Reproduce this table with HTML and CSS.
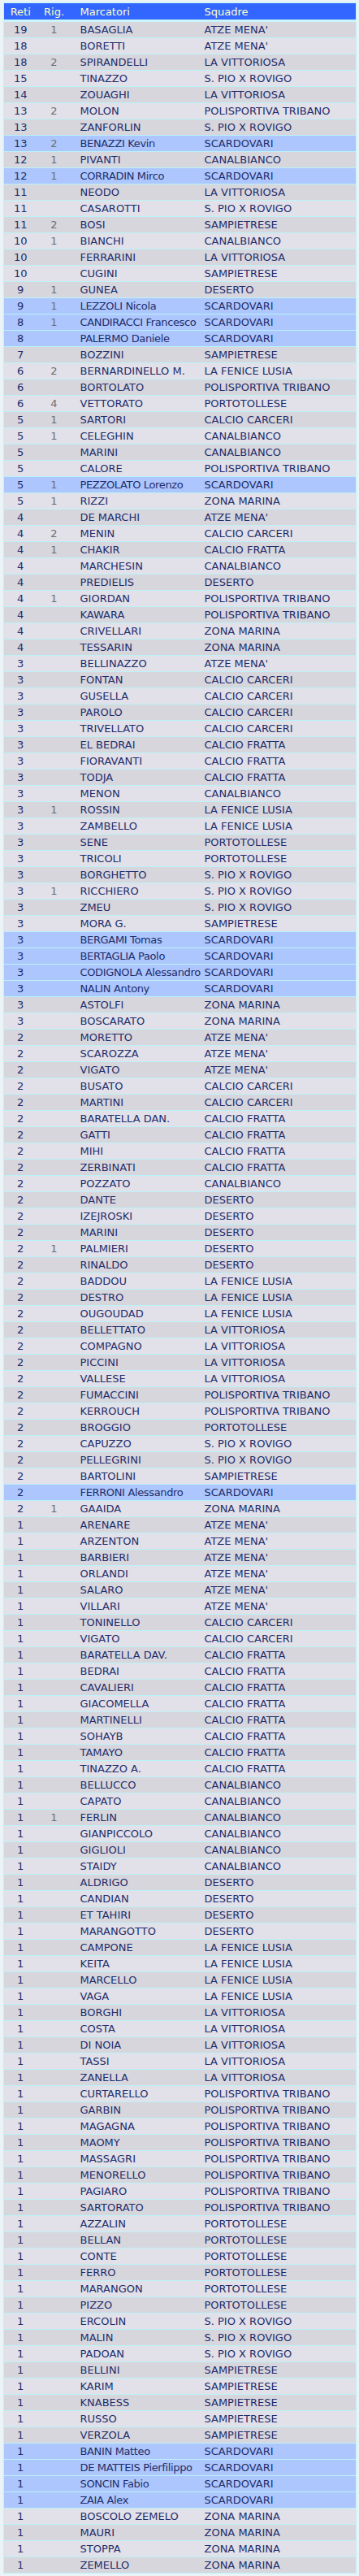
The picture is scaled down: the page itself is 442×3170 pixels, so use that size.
FILE: index.html
```html
<!DOCTYPE html>
<html lang="it">
<head>
<meta charset="utf-8">
<title>Marcatori</title>
<link rel="stylesheet" href="styles.css">
</head>
<body>
<div class="wrap">
<table class="scorers">
<colgroup><col class="c-reti"><col class="c-rig"><col class="c-name"><col class="c-team"></colgroup>
<thead>
<tr><th class="num">Reti</th><th class="num">Rig.</th><th class="txt">Marcatori</th><th class="txt team">Squadre</th></tr>
</thead>
<tbody>
<tr><td class="num">19</td><td class="rig">1</td><td class="txt">BASAGLIA</td><td class="txt team">ATZE MENA'</td></tr>
<tr><td class="num">18</td><td class="rig"></td><td class="txt">BORETTI</td><td class="txt team">ATZE MENA'</td></tr>
<tr><td class="num">18</td><td class="rig">2</td><td class="txt">SPIRANDELLI</td><td class="txt team">LA VITTORIOSA</td></tr>
<tr><td class="num">15</td><td class="rig"></td><td class="txt">TINAZZO</td><td class="txt team">S. PIO X ROVIGO</td></tr>
<tr><td class="num">14</td><td class="rig"></td><td class="txt">ZOUAGHI</td><td class="txt team">LA VITTORIOSA</td></tr>
<tr><td class="num">13</td><td class="rig">2</td><td class="txt">MOLON</td><td class="txt team">POLISPORTIVA TRIBANO</td></tr>
<tr><td class="num">13</td><td class="rig"></td><td class="txt">ZANFORLIN</td><td class="txt team">S. PIO X ROVIGO</td></tr>
<tr class="own"><td class="num">13</td><td class="rig">2</td><td class="txt">BENAZZI Kevin</td><td class="txt team">SCARDOVARI</td></tr>
<tr><td class="num">12</td><td class="rig">1</td><td class="txt">PIVANTI</td><td class="txt team">CANALBIANCO</td></tr>
<tr class="own"><td class="num">12</td><td class="rig">1</td><td class="txt">CORRADIN Mirco</td><td class="txt team">SCARDOVARI</td></tr>
<tr><td class="num">11</td><td class="rig"></td><td class="txt">NEODO</td><td class="txt team">LA VITTORIOSA</td></tr>
<tr><td class="num">11</td><td class="rig"></td><td class="txt">CASAROTTI</td><td class="txt team">S. PIO X ROVIGO</td></tr>
<tr><td class="num">11</td><td class="rig">2</td><td class="txt">BOSI</td><td class="txt team">SAMPIETRESE</td></tr>
<tr><td class="num">10</td><td class="rig">1</td><td class="txt">BIANCHI</td><td class="txt team">CANALBIANCO</td></tr>
<tr><td class="num">10</td><td class="rig"></td><td class="txt">FERRARINI</td><td class="txt team">LA VITTORIOSA</td></tr>
<tr><td class="num">10</td><td class="rig"></td><td class="txt">CUGINI</td><td class="txt team">SAMPIETRESE</td></tr>
<tr><td class="num">9</td><td class="rig">1</td><td class="txt">GUNEA</td><td class="txt team">DESERTO</td></tr>
<tr class="own"><td class="num">9</td><td class="rig">1</td><td class="txt">LEZZOLI Nicola</td><td class="txt team">SCARDOVARI</td></tr>
<tr class="own"><td class="num">8</td><td class="rig">1</td><td class="txt">CANDIRACCI Francesco</td><td class="txt team">SCARDOVARI</td></tr>
<tr class="own"><td class="num">8</td><td class="rig"></td><td class="txt">PALERMO Daniele</td><td class="txt team">SCARDOVARI</td></tr>
<tr><td class="num">7</td><td class="rig"></td><td class="txt">BOZZINI</td><td class="txt team">SAMPIETRESE</td></tr>
<tr><td class="num">6</td><td class="rig">2</td><td class="txt">BERNARDINELLO M.</td><td class="txt team">LA FENICE LUSIA</td></tr>
<tr><td class="num">6</td><td class="rig"></td><td class="txt">BORTOLATO</td><td class="txt team">POLISPORTIVA TRIBANO</td></tr>
<tr><td class="num">6</td><td class="rig">4</td><td class="txt">VETTORATO</td><td class="txt team">PORTOTOLLESE</td></tr>
<tr><td class="num">5</td><td class="rig">1</td><td class="txt">SARTORI</td><td class="txt team">CALCIO CARCERI</td></tr>
<tr><td class="num">5</td><td class="rig">1</td><td class="txt">CELEGHIN</td><td class="txt team">CANALBIANCO</td></tr>
<tr><td class="num">5</td><td class="rig"></td><td class="txt">MARINI</td><td class="txt team">CANALBIANCO</td></tr>
<tr><td class="num">5</td><td class="rig"></td><td class="txt">CALORE</td><td class="txt team">POLISPORTIVA TRIBANO</td></tr>
<tr class="own"><td class="num">5</td><td class="rig">1</td><td class="txt">PEZZOLATO Lorenzo</td><td class="txt team">SCARDOVARI</td></tr>
<tr><td class="num">5</td><td class="rig">1</td><td class="txt">RIZZI</td><td class="txt team">ZONA MARINA</td></tr>
<tr><td class="num">4</td><td class="rig"></td><td class="txt">DE MARCHI</td><td class="txt team">ATZE MENA'</td></tr>
<tr><td class="num">4</td><td class="rig">2</td><td class="txt">MENIN</td><td class="txt team">CALCIO CARCERI</td></tr>
<tr><td class="num">4</td><td class="rig">1</td><td class="txt">CHAKIR</td><td class="txt team">CALCIO FRATTA</td></tr>
<tr><td class="num">4</td><td class="rig"></td><td class="txt">MARCHESIN</td><td class="txt team">CANALBIANCO</td></tr>
<tr><td class="num">4</td><td class="rig"></td><td class="txt">PREDIELIS</td><td class="txt team">DESERTO</td></tr>
<tr><td class="num">4</td><td class="rig">1</td><td class="txt">GIORDAN</td><td class="txt team">POLISPORTIVA TRIBANO</td></tr>
<tr><td class="num">4</td><td class="rig"></td><td class="txt">KAWARA</td><td class="txt team">POLISPORTIVA TRIBANO</td></tr>
<tr><td class="num">4</td><td class="rig"></td><td class="txt">CRIVELLARI</td><td class="txt team">ZONA MARINA</td></tr>
<tr><td class="num">4</td><td class="rig"></td><td class="txt">TESSARIN</td><td class="txt team">ZONA MARINA</td></tr>
<tr><td class="num">3</td><td class="rig"></td><td class="txt">BELLINAZZO</td><td class="txt team">ATZE MENA'</td></tr>
<tr><td class="num">3</td><td class="rig"></td><td class="txt">FONTAN</td><td class="txt team">CALCIO CARCERI</td></tr>
<tr><td class="num">3</td><td class="rig"></td><td class="txt">GUSELLA</td><td class="txt team">CALCIO CARCERI</td></tr>
<tr><td class="num">3</td><td class="rig"></td><td class="txt">PAROLO</td><td class="txt team">CALCIO CARCERI</td></tr>
<tr><td class="num">3</td><td class="rig"></td><td class="txt">TRIVELLATO</td><td class="txt team">CALCIO CARCERI</td></tr>
<tr><td class="num">3</td><td class="rig"></td><td class="txt">EL BEDRAI</td><td class="txt team">CALCIO FRATTA</td></tr>
<tr><td class="num">3</td><td class="rig"></td><td class="txt">FIORAVANTI</td><td class="txt team">CALCIO FRATTA</td></tr>
<tr><td class="num">3</td><td class="rig"></td><td class="txt">TODJA</td><td class="txt team">CALCIO FRATTA</td></tr>
<tr><td class="num">3</td><td class="rig"></td><td class="txt">MENON</td><td class="txt team">CANALBIANCO</td></tr>
<tr><td class="num">3</td><td class="rig">1</td><td class="txt">ROSSIN</td><td class="txt team">LA FENICE LUSIA</td></tr>
<tr><td class="num">3</td><td class="rig"></td><td class="txt">ZAMBELLO</td><td class="txt team">LA FENICE LUSIA</td></tr>
<tr><td class="num">3</td><td class="rig"></td><td class="txt">SENE</td><td class="txt team">PORTOTOLLESE</td></tr>
<tr><td class="num">3</td><td class="rig"></td><td class="txt">TRICOLI</td><td class="txt team">PORTOTOLLESE</td></tr>
<tr><td class="num">3</td><td class="rig"></td><td class="txt">BORGHETTO</td><td class="txt team">S. PIO X ROVIGO</td></tr>
<tr><td class="num">3</td><td class="rig">1</td><td class="txt">RICCHIERO</td><td class="txt team">S. PIO X ROVIGO</td></tr>
<tr><td class="num">3</td><td class="rig"></td><td class="txt">ZMEU</td><td class="txt team">S. PIO X ROVIGO</td></tr>
<tr><td class="num">3</td><td class="rig"></td><td class="txt">MORA G.</td><td class="txt team">SAMPIETRESE</td></tr>
<tr class="own"><td class="num">3</td><td class="rig"></td><td class="txt">BERGAMI Tomas</td><td class="txt team">SCARDOVARI</td></tr>
<tr class="own"><td class="num">3</td><td class="rig"></td><td class="txt">BERTAGLIA Paolo</td><td class="txt team">SCARDOVARI</td></tr>
<tr class="own"><td class="num">3</td><td class="rig"></td><td class="txt">CODIGNOLA Alessandro</td><td class="txt team">SCARDOVARI</td></tr>
<tr class="own"><td class="num">3</td><td class="rig"></td><td class="txt">NALIN Antony</td><td class="txt team">SCARDOVARI</td></tr>
<tr><td class="num">3</td><td class="rig"></td><td class="txt">ASTOLFI</td><td class="txt team">ZONA MARINA</td></tr>
<tr><td class="num">3</td><td class="rig"></td><td class="txt">BOSCARATO</td><td class="txt team">ZONA MARINA</td></tr>
<tr><td class="num">2</td><td class="rig"></td><td class="txt">MORETTO</td><td class="txt team">ATZE MENA'</td></tr>
<tr><td class="num">2</td><td class="rig"></td><td class="txt">SCAROZZA</td><td class="txt team">ATZE MENA'</td></tr>
<tr><td class="num">2</td><td class="rig"></td><td class="txt">VIGATO</td><td class="txt team">ATZE MENA'</td></tr>
<tr><td class="num">2</td><td class="rig"></td><td class="txt">BUSATO</td><td class="txt team">CALCIO CARCERI</td></tr>
<tr><td class="num">2</td><td class="rig"></td><td class="txt">MARTINI</td><td class="txt team">CALCIO CARCERI</td></tr>
<tr><td class="num">2</td><td class="rig"></td><td class="txt">BARATELLA DAN.</td><td class="txt team">CALCIO FRATTA</td></tr>
<tr><td class="num">2</td><td class="rig"></td><td class="txt">GATTI</td><td class="txt team">CALCIO FRATTA</td></tr>
<tr><td class="num">2</td><td class="rig"></td><td class="txt">MIHI</td><td class="txt team">CALCIO FRATTA</td></tr>
<tr><td class="num">2</td><td class="rig"></td><td class="txt">ZERBINATI</td><td class="txt team">CALCIO FRATTA</td></tr>
<tr><td class="num">2</td><td class="rig"></td><td class="txt">POZZATO</td><td class="txt team">CANALBIANCO</td></tr>
<tr><td class="num">2</td><td class="rig"></td><td class="txt">DANTE</td><td class="txt team">DESERTO</td></tr>
<tr><td class="num">2</td><td class="rig"></td><td class="txt">IZEJROSKI</td><td class="txt team">DESERTO</td></tr>
<tr><td class="num">2</td><td class="rig"></td><td class="txt">MARINI</td><td class="txt team">DESERTO</td></tr>
<tr><td class="num">2</td><td class="rig">1</td><td class="txt">PALMIERI</td><td class="txt team">DESERTO</td></tr>
<tr><td class="num">2</td><td class="rig"></td><td class="txt">RINALDO</td><td class="txt team">DESERTO</td></tr>
<tr><td class="num">2</td><td class="rig"></td><td class="txt">BADDOU</td><td class="txt team">LA FENICE LUSIA</td></tr>
<tr><td class="num">2</td><td class="rig"></td><td class="txt">DESTRO</td><td class="txt team">LA FENICE LUSIA</td></tr>
<tr><td class="num">2</td><td class="rig"></td><td class="txt">OUGOUDAD</td><td class="txt team">LA FENICE LUSIA</td></tr>
<tr><td class="num">2</td><td class="rig"></td><td class="txt">BELLETTATO</td><td class="txt team">LA VITTORIOSA</td></tr>
<tr><td class="num">2</td><td class="rig"></td><td class="txt">COMPAGNO</td><td class="txt team">LA VITTORIOSA</td></tr>
<tr><td class="num">2</td><td class="rig"></td><td class="txt">PICCINI</td><td class="txt team">LA VITTORIOSA</td></tr>
<tr><td class="num">2</td><td class="rig"></td><td class="txt">VALLESE</td><td class="txt team">LA VITTORIOSA</td></tr>
<tr><td class="num">2</td><td class="rig"></td><td class="txt">FUMACCINI</td><td class="txt team">POLISPORTIVA TRIBANO</td></tr>
<tr><td class="num">2</td><td class="rig"></td><td class="txt">KERROUCH</td><td class="txt team">POLISPORTIVA TRIBANO</td></tr>
<tr><td class="num">2</td><td class="rig"></td><td class="txt">BROGGIO</td><td class="txt team">PORTOTOLLESE</td></tr>
<tr><td class="num">2</td><td class="rig"></td><td class="txt">CAPUZZO</td><td class="txt team">S. PIO X ROVIGO</td></tr>
<tr><td class="num">2</td><td class="rig"></td><td class="txt">PELLEGRINI</td><td class="txt team">S. PIO X ROVIGO</td></tr>
<tr><td class="num">2</td><td class="rig"></td><td class="txt">BARTOLINI</td><td class="txt team">SAMPIETRESE</td></tr>
<tr class="own"><td class="num">2</td><td class="rig"></td><td class="txt">FERRONI Alessandro</td><td class="txt team">SCARDOVARI</td></tr>
<tr><td class="num">2</td><td class="rig">1</td><td class="txt">GAAIDA</td><td class="txt team">ZONA MARINA</td></tr>
<tr><td class="num">1</td><td class="rig"></td><td class="txt">ARENARE</td><td class="txt team">ATZE MENA'</td></tr>
<tr><td class="num">1</td><td class="rig"></td><td class="txt">ARZENTON</td><td class="txt team">ATZE MENA'</td></tr>
<tr><td class="num">1</td><td class="rig"></td><td class="txt">BARBIERI</td><td class="txt team">ATZE MENA'</td></tr>
<tr><td class="num">1</td><td class="rig"></td><td class="txt">ORLANDI</td><td class="txt team">ATZE MENA'</td></tr>
<tr><td class="num">1</td><td class="rig"></td><td class="txt">SALARO</td><td class="txt team">ATZE MENA'</td></tr>
<tr><td class="num">1</td><td class="rig"></td><td class="txt">VILLARI</td><td class="txt team">ATZE MENA'</td></tr>
<tr><td class="num">1</td><td class="rig"></td><td class="txt">TONINELLO</td><td class="txt team">CALCIO CARCERI</td></tr>
<tr><td class="num">1</td><td class="rig"></td><td class="txt">VIGATO</td><td class="txt team">CALCIO CARCERI</td></tr>
<tr><td class="num">1</td><td class="rig"></td><td class="txt">BARATELLA DAV.</td><td class="txt team">CALCIO FRATTA</td></tr>
<tr><td class="num">1</td><td class="rig"></td><td class="txt">BEDRAI</td><td class="txt team">CALCIO FRATTA</td></tr>
<tr><td class="num">1</td><td class="rig"></td><td class="txt">CAVALIERI</td><td class="txt team">CALCIO FRATTA</td></tr>
<tr><td class="num">1</td><td class="rig"></td><td class="txt">GIACOMELLA</td><td class="txt team">CALCIO FRATTA</td></tr>
<tr><td class="num">1</td><td class="rig"></td><td class="txt">MARTINELLI</td><td class="txt team">CALCIO FRATTA</td></tr>
<tr><td class="num">1</td><td class="rig"></td><td class="txt">SOHAYB</td><td class="txt team">CALCIO FRATTA</td></tr>
<tr><td class="num">1</td><td class="rig"></td><td class="txt">TAMAYO</td><td class="txt team">CALCIO FRATTA</td></tr>
<tr><td class="num">1</td><td class="rig"></td><td class="txt">TINAZZO A.</td><td class="txt team">CALCIO FRATTA</td></tr>
<tr><td class="num">1</td><td class="rig"></td><td class="txt">BELLUCCO</td><td class="txt team">CANALBIANCO</td></tr>
<tr><td class="num">1</td><td class="rig"></td><td class="txt">CAPATO</td><td class="txt team">CANALBIANCO</td></tr>
<tr><td class="num">1</td><td class="rig">1</td><td class="txt">FERLIN</td><td class="txt team">CANALBIANCO</td></tr>
<tr><td class="num">1</td><td class="rig"></td><td class="txt">GIANPICCOLO</td><td class="txt team">CANALBIANCO</td></tr>
<tr><td class="num">1</td><td class="rig"></td><td class="txt">GIGLIOLI</td><td class="txt team">CANALBIANCO</td></tr>
<tr><td class="num">1</td><td class="rig"></td><td class="txt">STAIDY</td><td class="txt team">CANALBIANCO</td></tr>
<tr><td class="num">1</td><td class="rig"></td><td class="txt">ALDRIGO</td><td class="txt team">DESERTO</td></tr>
<tr><td class="num">1</td><td class="rig"></td><td class="txt">CANDIAN</td><td class="txt team">DESERTO</td></tr>
<tr><td class="num">1</td><td class="rig"></td><td class="txt">ET TAHIRI</td><td class="txt team">DESERTO</td></tr>
<tr><td class="num">1</td><td class="rig"></td><td class="txt">MARANGOTTO</td><td class="txt team">DESERTO</td></tr>
<tr><td class="num">1</td><td class="rig"></td><td class="txt">CAMPONE</td><td class="txt team">LA FENICE LUSIA</td></tr>
<tr><td class="num">1</td><td class="rig"></td><td class="txt">KEITA</td><td class="txt team">LA FENICE LUSIA</td></tr>
<tr><td class="num">1</td><td class="rig"></td><td class="txt">MARCELLO</td><td class="txt team">LA FENICE LUSIA</td></tr>
<tr><td class="num">1</td><td class="rig"></td><td class="txt">VAGA</td><td class="txt team">LA FENICE LUSIA</td></tr>
<tr><td class="num">1</td><td class="rig"></td><td class="txt">BORGHI</td><td class="txt team">LA VITTORIOSA</td></tr>
<tr><td class="num">1</td><td class="rig"></td><td class="txt">COSTA</td><td class="txt team">LA VITTORIOSA</td></tr>
<tr><td class="num">1</td><td class="rig"></td><td class="txt">DI NOIA</td><td class="txt team">LA VITTORIOSA</td></tr>
<tr><td class="num">1</td><td class="rig"></td><td class="txt">TASSI</td><td class="txt team">LA VITTORIOSA</td></tr>
<tr><td class="num">1</td><td class="rig"></td><td class="txt">ZANELLA</td><td class="txt team">LA VITTORIOSA</td></tr>
<tr><td class="num">1</td><td class="rig"></td><td class="txt">CURTARELLO</td><td class="txt team">POLISPORTIVA TRIBANO</td></tr>
<tr><td class="num">1</td><td class="rig"></td><td class="txt">GARBIN</td><td class="txt team">POLISPORTIVA TRIBANO</td></tr>
<tr><td class="num">1</td><td class="rig"></td><td class="txt">MAGAGNA</td><td class="txt team">POLISPORTIVA TRIBANO</td></tr>
<tr><td class="num">1</td><td class="rig"></td><td class="txt">MAOMY</td><td class="txt team">POLISPORTIVA TRIBANO</td></tr>
<tr><td class="num">1</td><td class="rig"></td><td class="txt">MASSAGRI</td><td class="txt team">POLISPORTIVA TRIBANO</td></tr>
<tr><td class="num">1</td><td class="rig"></td><td class="txt">MENORELLO</td><td class="txt team">POLISPORTIVA TRIBANO</td></tr>
<tr><td class="num">1</td><td class="rig"></td><td class="txt">PAGIARO</td><td class="txt team">POLISPORTIVA TRIBANO</td></tr>
<tr><td class="num">1</td><td class="rig"></td><td class="txt">SARTORATO</td><td class="txt team">POLISPORTIVA TRIBANO</td></tr>
<tr><td class="num">1</td><td class="rig"></td><td class="txt">AZZALIN</td><td class="txt team">PORTOTOLLESE</td></tr>
<tr><td class="num">1</td><td class="rig"></td><td class="txt">BELLAN</td><td class="txt team">PORTOTOLLESE</td></tr>
<tr><td class="num">1</td><td class="rig"></td><td class="txt">CONTE</td><td class="txt team">PORTOTOLLESE</td></tr>
<tr><td class="num">1</td><td class="rig"></td><td class="txt">FERRO</td><td class="txt team">PORTOTOLLESE</td></tr>
<tr><td class="num">1</td><td class="rig"></td><td class="txt">MARANGON</td><td class="txt team">PORTOTOLLESE</td></tr>
<tr><td class="num">1</td><td class="rig"></td><td class="txt">PIZZO</td><td class="txt team">PORTOTOLLESE</td></tr>
<tr><td class="num">1</td><td class="rig"></td><td class="txt">ERCOLIN</td><td class="txt team">S. PIO X ROVIGO</td></tr>
<tr><td class="num">1</td><td class="rig"></td><td class="txt">MALIN</td><td class="txt team">S. PIO X ROVIGO</td></tr>
<tr><td class="num">1</td><td class="rig"></td><td class="txt">PADOAN</td><td class="txt team">S. PIO X ROVIGO</td></tr>
<tr><td class="num">1</td><td class="rig"></td><td class="txt">BELLINI</td><td class="txt team">SAMPIETRESE</td></tr>
<tr><td class="num">1</td><td class="rig"></td><td class="txt">KARIM</td><td class="txt team">SAMPIETRESE</td></tr>
<tr><td class="num">1</td><td class="rig"></td><td class="txt">KNABESS</td><td class="txt team">SAMPIETRESE</td></tr>
<tr><td class="num">1</td><td class="rig"></td><td class="txt">RUSSO</td><td class="txt team">SAMPIETRESE</td></tr>
<tr><td class="num">1</td><td class="rig"></td><td class="txt">VERZOLA</td><td class="txt team">SAMPIETRESE</td></tr>
<tr class="own"><td class="num">1</td><td class="rig"></td><td class="txt">BANIN Matteo</td><td class="txt team">SCARDOVARI</td></tr>
<tr class="own"><td class="num">1</td><td class="rig"></td><td class="txt">DE MATTEIS Pierfilippo</td><td class="txt team">SCARDOVARI</td></tr>
<tr class="own"><td class="num">1</td><td class="rig"></td><td class="txt">SONCIN Fabio</td><td class="txt team">SCARDOVARI</td></tr>
<tr class="own"><td class="num">1</td><td class="rig"></td><td class="txt">ZAIA Alex</td><td class="txt team">SCARDOVARI</td></tr>
<tr><td class="num">1</td><td class="rig"></td><td class="txt">BOSCOLO ZEMELO</td><td class="txt team">ZONA MARINA</td></tr>
<tr><td class="num">1</td><td class="rig"></td><td class="txt">MAURI</td><td class="txt team">ZONA MARINA</td></tr>
<tr><td class="num">1</td><td class="rig"></td><td class="txt">STOPPA</td><td class="txt team">ZONA MARINA</td></tr>
<tr><td class="num">1</td><td class="rig"></td><td class="txt">ZEMELLO</td><td class="txt team">ZONA MARINA</td></tr>
</tbody>
</table>
</div>
</body>
</html>
```
FILE: styles.css
```css
html, body {
  margin: 0;
  padding: 0;
  background: #eaf4f6;
}
.wrap {
  padding: 3px 3px 3px 4px;
}
.scorers {
  width: 435px;
  table-layout: fixed;
  border-collapse: collapse;
  border: 1px solid #bff3f8;
  font-family: "DejaVu Sans", Verdana, sans-serif;
  font-size: 13px;
  color: #1d2d6b;
}
.c-reti { width: 41px; }
.c-rig { width: 42px; }
.c-name { width: 162px; }
.c-team { width: auto; }
.scorers th {
  height: 20px;
  padding: 0;
  background: #3366ff;
  color: #ffffc4;
  font-weight: normal;
  border-bottom: 3px solid #c8f6fa;
  white-space: nowrap;
}
.scorers td {
  height: 19px;
  padding: 0;
  border-bottom: 1px solid #b9f3f9;
  white-space: nowrap;
  overflow: visible;
  vertical-align: middle;
}
.scorers tbody tr:nth-child(odd) { background: #d8d6dd; }
.scorers tbody tr:nth-child(even) { background: #e2e0e8; }
.scorers tbody tr.own { background: #adc6fd; }
.scorers tbody tr.own td:nth-child(3) { letter-spacing: -0.35px; }
.num { text-align: center; }
.rig { text-align: center; color: #6e6e6e; }
.scorers .txt { text-align: left; padding-left: 11px; }
.scorers .team { padding-left: 2px; }
```
